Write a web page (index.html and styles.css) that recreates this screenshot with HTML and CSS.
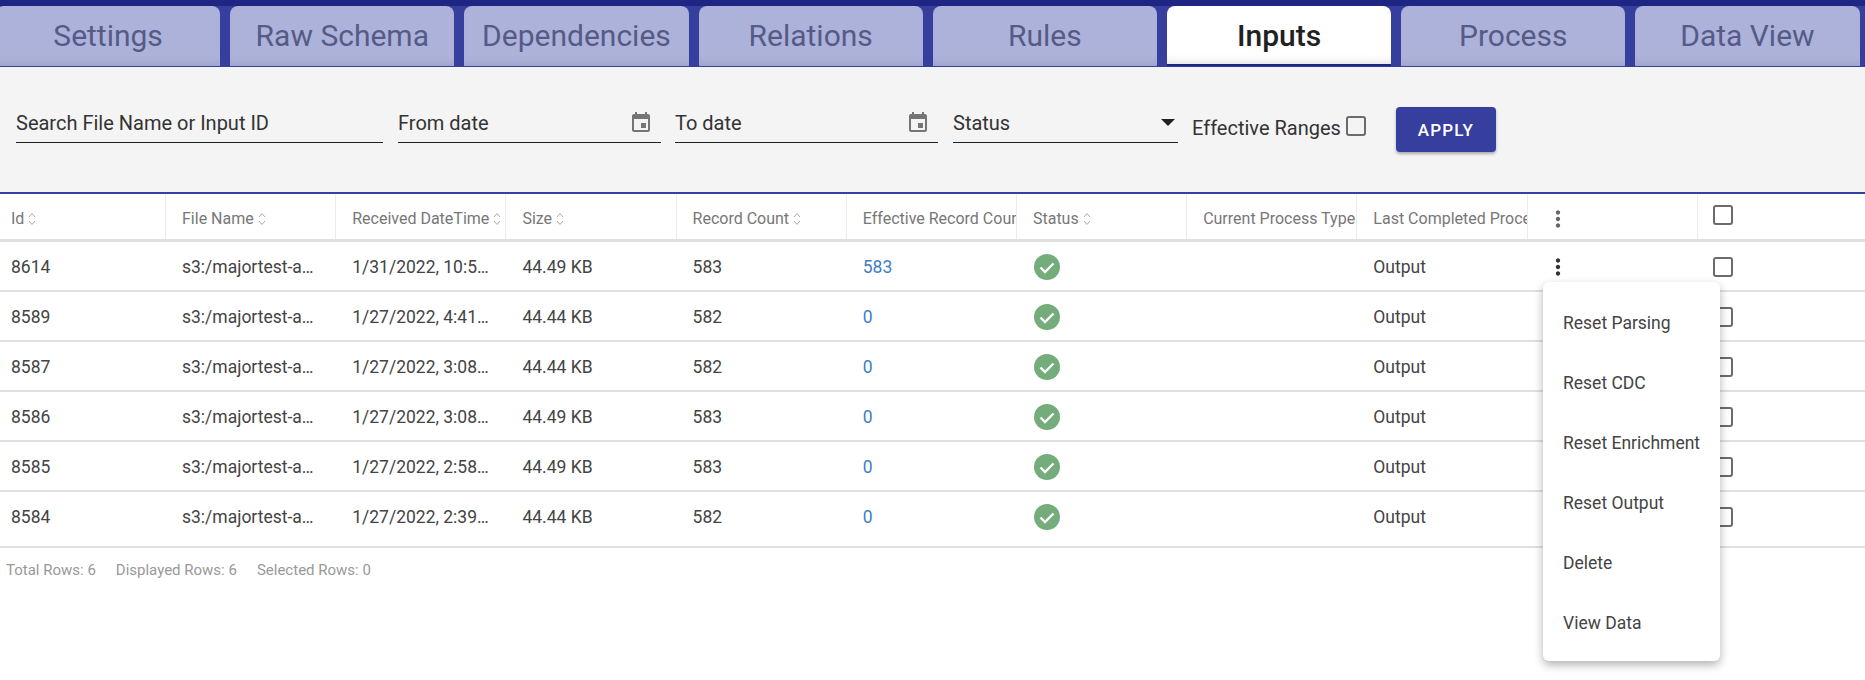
FILE: index.html
```html
<!DOCTYPE html>
<html lang="en">
<head>
    <meta charset="UTF-8">
    <meta name="viewport" content="width=device-width, initial-scale=1.0">
    <title>Inputs</title>
    <link rel="stylesheet" href="styles.css">
</head>
<body>
    <svg class="defs" width="0" height="0">
        <symbol id="event" viewBox="0 0 24 24"><path d="M17 12h-5v5h5v-5zM16 1v2H8V1H6v2H5c-1.11 0-1.99.9-1.99 2L3 19c0 1.1.89 2 2 2h14c1.1 0 2-.9 2-2V5c0-1.1-.9-2-2-2h-1V1h-2zm3 18H5V8h14v11z"/></symbol>
        <symbol id="kebab" viewBox="0 0 24 24"><path d="M12 8c1.1 0 2-.9 2-2s-.9-2-2-2-2 .9-2 2 .9 2 2 2zm0 2c-1.1 0-2 .9-2 2s.9 2 2 2 2-.9 2-2-.9-2-2-2zm0 6c-1.1 0-2 .9-2 2s.9 2 2 2 2-.9 2-2-.9-2-2-2z"/></symbol>
        <symbol id="sort" viewBox="0 0 8 14"><path d="M1 5l3-3.4L7 5M1 9l3 3.4L7 9" fill="none" stroke="currentColor" stroke-width="1"/></symbol>
        <symbol id="ok" viewBox="0 0 26 26"><circle cx="13" cy="13" r="13" fill="#74ad7b"/><path d="M6.500 13.500l4.500 4.500 8.500-8.500" fill="none" stroke="#fff" stroke-width="2.400"/></symbol>
    </svg>

    <div class="tabbar">
        <div class="tab">Settings</div>
        <div class="tab">Raw Schema</div>
        <div class="tab">Dependencies</div>
        <div class="tab">Relations</div>
        <div class="tab">Rules</div>
        <div class="tab active">Inputs</div>
        <div class="tab">Process</div>
        <div class="tab">Data View</div>
    </div>

    <div class="filters">
        <div class="field field-search"><span>Search File Name or Input ID</span></div>
        <div class="field field-date"><span>From date</span><svg class="icon-event"><use href="#event"/></svg></div>
        <div class="field field-date"><span>To date</span><svg class="icon-event"><use href="#event"/></svg></div>
        <div class="field field-status"><span>Status</span><i class="caret"></i></div>
        <label class="effective">Effective Ranges<i class="check"></i></label>
        <button class="apply">APPLY</button>
    </div>

    <div class="grid">
        <div class="row head">
            <div class="cell">Id<svg class="sort"><use href="#sort"/></svg></div>
            <div class="cell">File Name<svg class="sort"><use href="#sort"/></svg></div>
            <div class="cell">Received DateTime<svg class="sort"><use href="#sort"/></svg></div>
            <div class="cell">Size<svg class="sort"><use href="#sort"/></svg></div>
            <div class="cell">Record Count<svg class="sort"><use href="#sort"/></svg></div>
            <div class="cell">Effective Record Count</div>
            <div class="cell">Status<svg class="sort"><use href="#sort"/></svg></div>
            <div class="cell">Current Process Type</div>
            <div class="cell">Last Completed Process</div>
            <div class="cell"><svg class="kebab"><use href="#kebab"/></svg></div>
            <div class="cell"><i class="check"></i></div>
        </div>
        <div class="row">
            <div class="cell">8614</div>
            <div class="cell">s3:/majortest-a…</div>
            <div class="cell">1/31/2022, 10:5…</div>
            <div class="cell">44.49 KB</div>
            <div class="cell">583</div>
            <div class="cell link">583</div>
            <div class="cell"><svg class="ok"><use href="#ok"/></svg></div>
            <div class="cell"></div>
            <div class="cell">Output</div>
            <div class="cell"><svg class="kebab"><use href="#kebab"/></svg></div>
            <div class="cell"><i class="check"></i></div>
        </div>
        <div class="row">
            <div class="cell">8589</div>
            <div class="cell">s3:/majortest-a…</div>
            <div class="cell">1/27/2022, 4:41…</div>
            <div class="cell">44.44 KB</div>
            <div class="cell">582</div>
            <div class="cell link">0</div>
            <div class="cell"><svg class="ok"><use href="#ok"/></svg></div>
            <div class="cell"></div>
            <div class="cell">Output</div>
            <div class="cell"></div>
            <div class="cell"><i class="check"></i></div>
        </div>
        <div class="row">
            <div class="cell">8587</div>
            <div class="cell">s3:/majortest-a…</div>
            <div class="cell">1/27/2022, 3:08…</div>
            <div class="cell">44.44 KB</div>
            <div class="cell">582</div>
            <div class="cell link">0</div>
            <div class="cell"><svg class="ok"><use href="#ok"/></svg></div>
            <div class="cell"></div>
            <div class="cell">Output</div>
            <div class="cell"></div>
            <div class="cell"><i class="check"></i></div>
        </div>
        <div class="row">
            <div class="cell">8586</div>
            <div class="cell">s3:/majortest-a…</div>
            <div class="cell">1/27/2022, 3:08…</div>
            <div class="cell">44.49 KB</div>
            <div class="cell">583</div>
            <div class="cell link">0</div>
            <div class="cell"><svg class="ok"><use href="#ok"/></svg></div>
            <div class="cell"></div>
            <div class="cell">Output</div>
            <div class="cell"></div>
            <div class="cell"><i class="check"></i></div>
        </div>
        <div class="row">
            <div class="cell">8585</div>
            <div class="cell">s3:/majortest-a…</div>
            <div class="cell">1/27/2022, 2:58…</div>
            <div class="cell">44.49 KB</div>
            <div class="cell">583</div>
            <div class="cell link">0</div>
            <div class="cell"><svg class="ok"><use href="#ok"/></svg></div>
            <div class="cell"></div>
            <div class="cell">Output</div>
            <div class="cell"></div>
            <div class="cell"><i class="check"></i></div>
        </div>
        <div class="row last">
            <div class="cell">8584</div>
            <div class="cell">s3:/majortest-a…</div>
            <div class="cell">1/27/2022, 2:39…</div>
            <div class="cell">44.44 KB</div>
            <div class="cell">582</div>
            <div class="cell link">0</div>
            <div class="cell"><svg class="ok"><use href="#ok"/></svg></div>
            <div class="cell"></div>
            <div class="cell">Output</div>
            <div class="cell"></div>
            <div class="cell"><i class="check"></i></div>
        </div>
    </div>

    <div class="summary">
        <span>Total Rows: 6</span>
        <span>Displayed Rows: 6</span>
        <span>Selected Rows: 0</span>
    </div>

    <ul class="menu">
        <li>Reset Parsing</li>
        <li>Reset CDC</li>
        <li>Reset Enrichment</li>
        <li>Reset Output</li>
        <li>Delete</li>
        <li>View Data</li>
    </ul>
</body>
</html>
```

FILE: styles.css
```css
html, body {
    margin: 0;
    height: 680px;
    overflow: hidden;
}

body {
    position: relative;
    background-color: white;
    font-family: Roboto, "Liberation Sans", sans-serif;
    font-size: 17.5px;
    color: #444;
}

.defs {
    position: absolute;
}

/* tabs */
.tabbar {
    display: flex;
    gap: 10px;
    height: 60px;
    margin-left: -4px;
    padding-top: 6px;
    background: linear-gradient(#1f2583 6px, #373f9e 6px);
    border-bottom: 1px solid #373f9e;
}

.tab {
    flex: 0 0 224.2px;
    display: flex;
    align-items: center;
    justify-content: center;
    box-sizing: border-box;
    padding-bottom: 2px;
    background-color: #adb2da;
    border-radius: 8px 8px 0 0;
    box-shadow: inset 0 -8px 8px -6px rgba(0, 0, 0, 0.1);
    color: #555b86;
    font-size: 30px;
}

.tab.active {
    padding-bottom: 0;
    background-color: white;
    color: #212121;
    font-weight: 500;
    box-shadow: inset 0 -8px 8px -6px rgba(0, 0, 0, 0.12);
    border-bottom: 2px solid #1f2583;
}

/* filter row */
.filters {
    display: flex;
    align-items: center;
    height: 125px;
    padding-left: 16px;
    background-color: #f4f4f4;
    border-bottom: 2px solid #373f9e;
}

.field {
    display: flex;
    align-items: center;
    justify-content: space-between;
    box-sizing: border-box;
    height: 36px;
    margin-right: 14px;
    margin-bottom: 9px;
    padding-bottom: 4px;
    border-bottom: 1px solid #212121;
    color: #333;
    font-size: 20px;
}

.field-search {
    width: 367px;
    margin-right: 15px;
}

.field-date {
    width: 263px;
    padding-right: 8px;
}

.field-date + .field-date {
    margin-right: 15px;
}

.field-status {
    width: 225px;
    margin-right: 14px;
    padding-right: 3px;
}

.icon-event {
    width: 24px;
    height: 24px;
    fill: #757575;
}

.caret {
    width: 0;
    height: 0;
    border-left: 7px solid transparent;
    border-right: 7px solid transparent;
    border-top: 7px solid #212121;
}

.effective {
    display: flex;
    align-items: center;
    margin-bottom: 4px;
    font-size: 20px;
    color: #333;
}

.check {
    display: block;
    box-sizing: border-box;
    width: 20px;
    height: 20px;
    border: 2px solid #6b6b6b;
    border-radius: 3px;
}

.effective .check {
    margin-left: 5px;
    margin-bottom: 3px;
}

.apply {
    width: 100px;
    height: 45px;
    margin-left: 30px;
    border: none;
    border-radius: 4px;
    background-color: #373f9e;
    box-shadow: 0 2px 3px rgba(0, 0, 0, 0.3);
    color: white;
    font-family: Roboto, sans-serif;
    font-size: 17px;
    font-weight: 500;
    letter-spacing: 1.2px;
}

/* table */
.row {
    display: grid;
    grid-template-columns: 166px repeat(9, 170.2px) 1fr;
    height: 50px;
    box-sizing: border-box;
    border-bottom: 2px solid #e0e0e0;
}

.row.head {
    height: 48px;
    border-bottom: 3px solid #e0e0e0;
    color: #777;
    font-size: 16px;
}

.row.last {
    height: 56px;
    padding-bottom: 6px;
}

.cell {
    display: flex;
    align-items: center;
    min-width: 0;
    padding-top: 2px;
    padding-left: 16px;
    overflow: hidden;
    white-space: nowrap;
}

.row .cell:first-child {
    padding-left: 11px;
}

.head .cell {
    padding-top: 4px;
    border-right: 1px solid #ececec;
}

.head .cell:last-child {
    border-right: none;
}

.head .check {
    margin-bottom: 8px;
}

.row .check {
    margin-left: -1px;
}

.link {
    color: #3f7fc4;
}

.sort {
    flex: none;
    width: 8px;
    height: 14px;
    margin-left: 4px;
    color: #aaa;
}

.ok {
    width: 26px;
    height: 26px;
    margin-left: 1px;
}

.kebab {
    width: 26px;
    height: 26px;
    margin-left: 1px;
    fill: #333;
}

.head .kebab {
    margin-top: 1px;
    fill: #666;
}

.summary {
    display: flex;
    gap: 20px;
    padding-top: 13px;
    padding-left: 6px;
    color: #999;
    font-size: 15px;
}

/* row action menu */
.menu {
    position: absolute;
    left: 1543px;
    top: 282px;
    width: 177px;
    margin: 0;
    padding: 11px 0 8px 0;
    list-style: none;
    background-color: white;
    border-radius: 6px;
    box-shadow: 0 4px 10px rgba(0, 0, 0, 0.3);
}

.menu li {
    display: flex;
    align-items: center;
    height: 60px;
    padding-left: 20px;
    color: #444;
}
```
